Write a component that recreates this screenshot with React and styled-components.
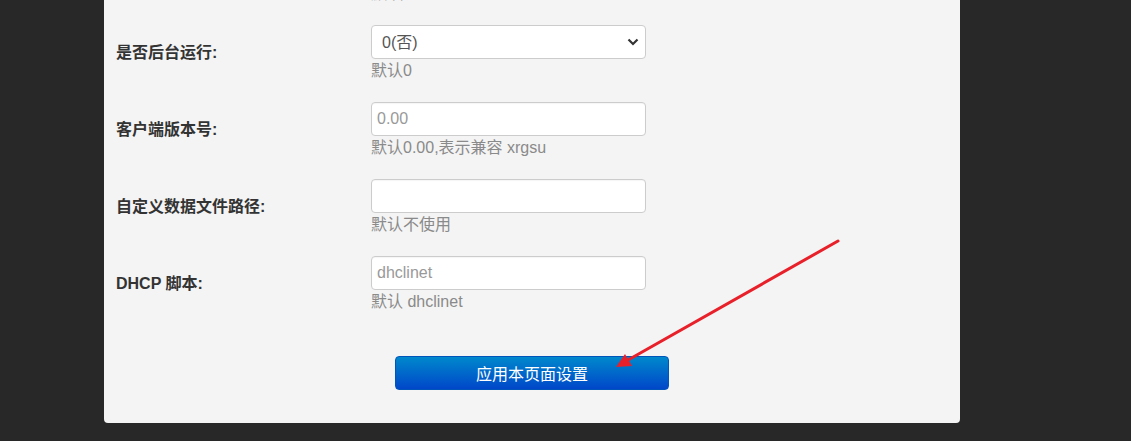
import React from "react";
import styled, { createGlobalStyle } from "styled-components";

const Global = createGlobalStyle`
  html, body { margin: 0; padding: 0; background: #282828; overflow: hidden; }
  body { font-family: "Liberation Sans", Arial, "Noto Sans CJK SC", sans-serif; }
`;

const Page = styled.div`
  position: relative;
  width: 1131px;
  height: 441px;
  overflow: hidden;
`;

const Panel = styled.div`
  margin: -52px 0 0 104px;
  width: 856px;
  background: #f4f4f4;
  border-radius: 0 0 4px 4px;
  padding: 0 0 33px 0;
  display: flex;
  flex-direction: column;
`;

const Row = styled.div`
  display: grid;
  grid-template-columns: 255px 275px;
  align-items: center;
  padding-left: 12px;
  margin-bottom: ${(p) => (p.$last ? "0" : "21px")};
`;

const Label = styled.label`
  font-size: 16px;
  font-weight: bold;
  color: #333;
  line-height: 20px;
`;

const Field = styled.div`
  display: flex;
  flex-direction: column;
`;

const Input = styled.input`
  box-sizing: border-box;
  width: 275px;
  height: 34px;
  border: 1px solid #ccc;
  border-radius: 4px;
  background: #fff;
  padding: 0 5px;
  font: 16px "Liberation Sans", Arial, "Noto Sans CJK SC", sans-serif;
  color: #555;
  outline: none;
  box-shadow: inset 0 1px 1px rgba(0,0,0,0.04);
  &::placeholder { color: #999; }
`;

const SelectWrap = styled.div`
  position: relative;
  width: 275px;
  height: 34px;
`;

const Select = styled.select`
  appearance: none;
  box-sizing: border-box;
  width: 100%;
  height: 34px;
  border: 1px solid #ccc;
  border-radius: 4px;
  background: #fff;
  padding: 0 10px;
  font: 16px "Liberation Sans", Arial, "Noto Sans CJK SC", sans-serif;
  color: #555;
  outline: none;
`;

const Chevron = styled.svg`
  position: absolute;
  right: 7px;
  top: 13px;
  pointer-events: none;
`;

const Help = styled.div`
  margin-top: 2px;
  font-size: 16px;
  line-height: 20px;
  color: #8a8a8a;
`;

const Actions = styled.div`
  display: flex;
  justify-content: center;
  margin-top: 44px;
`;

const Button = styled.button`
  width: 274px;
  height: 34px;
  border: 1px solid #0055bb;
  border-radius: 4px;
  background: linear-gradient(to bottom, #0088cc, #0047c9);
  color: #fff;
  font: 16px "Liberation Sans", Arial, "Noto Sans CJK SC", sans-serif;
  cursor: pointer;
`;

const Arrow = styled.svg`
  position: absolute;
  left: 0;
  top: 0;
  pointer-events: none;
`;

const rows = [
  { label: "", value: "", help: "默认" },
  { label: "是否后台运行:", select: "0(否)", help: "默认0" },
  { label: "客户端版本号:", placeholder: "0.00", help: "默认0.00,表示兼容 xrgsu" },
  { label: "自定义数据文件路径:", placeholder: "", help: "默认不使用" },
  { label: "DHCP 脚本:", placeholder: "dhclinet", help: "默认 dhclinet" },
];

export default function App() {
  return (
    <Page>
      <Global />
      <Panel>
        {rows.map((r, i) => (
          <Row key={i} $last={i === rows.length - 1}>
            <Label>{r.label}</Label>
            <Field>
              {r.select ? (
                <SelectWrap>
                  <Select defaultValue="0">
                    <option value="0">{r.select}</option>
                    <option value="1">1(是)</option>
                  </Select>
                  <Chevron width="12" height="8" viewBox="0 0 12 8">
                    <path d="M1.5 1.5 L6 6 L10.5 1.5" fill="none" stroke="#333" strokeWidth="2.2" />
                  </Chevron>
                </SelectWrap>
              ) : (
                <Input placeholder={r.placeholder} defaultValue={r.value} />
              )}
              <Help>{r.help}</Help>
            </Field>
          </Row>
        ))}
        <Actions>
          <Button>应用本页面设置</Button>
        </Actions>
      </Panel>
      <Arrow width="1131" height="441" viewBox="0 0 1131 441">
        <line x1="838" y1="241" x2="628" y2="360" stroke="#e8202a" strokeWidth="3" strokeLinecap="round" />
        <polygon points="616,367 625,354 632,366" fill="#e8202a" />
      </Arrow>
    </Page>
  );
}
